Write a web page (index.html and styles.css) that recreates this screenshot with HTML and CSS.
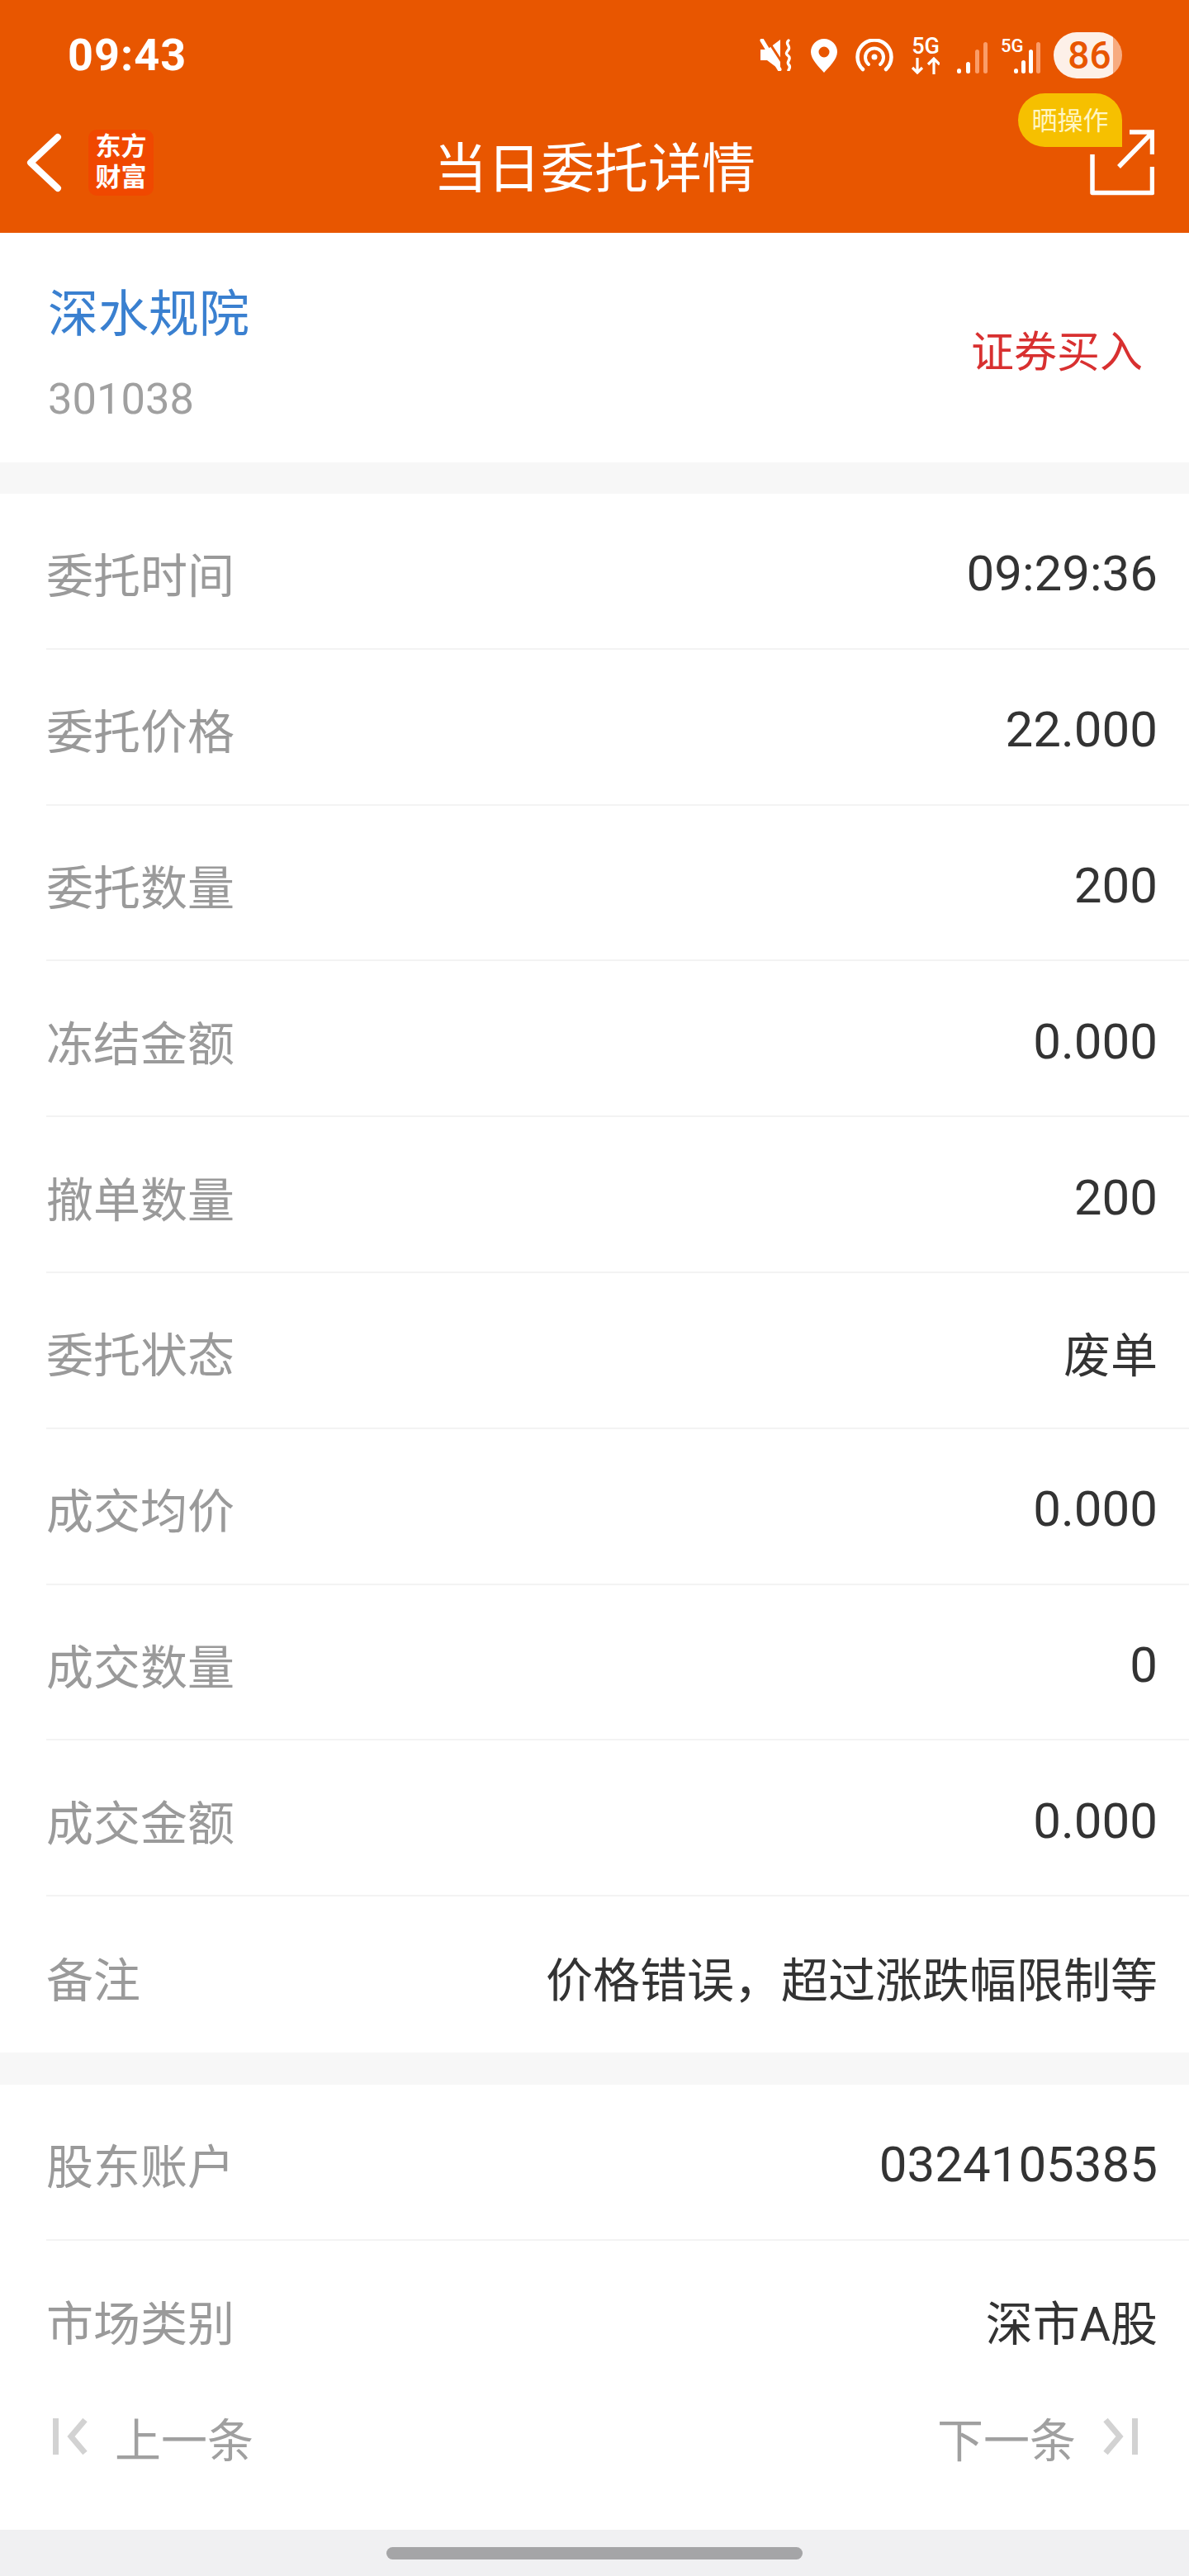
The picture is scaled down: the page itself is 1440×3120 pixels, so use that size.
FILE: index.html
```html
<!DOCTYPE html>
<html lang="zh-CN">
<head>
    <meta charset="UTF-8">
    <meta name="viewport" content="width=device-width, initial-scale=1.0">
    <title>当日委托详情</title>
    <link rel="stylesheet" href="styles.css">
</head>
<body>
    <div class="page">
        <header class="top">
            <div class="statusbar">
                <span class="clock">09:43</span>
                <div class="status-icons">
                    <svg class="ico" width="40" height="39" viewBox="0 0 40 39">
                        <path d="M1 13h8L25 1v37L9 26H1z" fill="#fff"/>
                        <path d="M8 -1l24 37" stroke="#e85600" stroke-width="3"/>
                        <path d="M3 2l21 35" stroke="#fff" stroke-width="5" stroke-linecap="round"/>
                        <path d="M35 2c-5 4 3 7 0 11s-4 5 0 8-3 7 0 10 1 5 0 7" fill="none" stroke="#fff" stroke-width="3.400" stroke-linecap="round"/>
                    </svg>
                    <svg class="ico" width="32" height="41" viewBox="0 0 32 41">
                        <path fill-rule="evenodd" d="M16 0a16 16 0 0 1 16 16c0 9-10 18-16 25C10 34 0 25 0 16A16 16 0 0 1 16 0zm0 9.500a6.500 6.500 0 1 0 0 13 6.500 6.500 0 0 0 0-13z" fill="#fff"/>
                    </svg>
                    <svg class="ico" width="46" height="40" viewBox="0 0 46 40">
                        <path d="M9 37a20.500 20.500 0 1 1 28 0" fill="none" stroke="#fff" stroke-width="4.500" stroke-linecap="round"/>
                        <path d="M16 31a11 11 0 1 1 14 0" fill="none" stroke="#fff" stroke-width="4" stroke-linecap="round"/>
                        <circle cx="23" cy="22" r="3.500" fill="#fff"/>
                    </svg>
                    <div class="net">
                        <span>5G</span>
                        <svg width="34" height="21" viewBox="0 0 34 21">
                            <path d="M7 1v18M1 13l6 6 6-6M27 21V2M20 9l7-7 7 7" fill="none" stroke="#fff" stroke-width="3.200"/>
                        </svg>
                    </div>
                    <svg class="ico bars" width="37" height="38" viewBox="0 0 37 38">
                        <rect x="0" y="32" width="5" height="6" rx="2.500" fill="#fff"/>
                        <rect x="11" y="24" width="5" height="14" rx="2.500" fill="#fff"/>
                        <rect x="22" y="9" width="5" height="29" rx="2.500" fill="#fb9d68"/>
                        <rect x="32" y="0" width="5" height="38" rx="2.500" fill="#fb9d68"/>
                    </svg>
                    <div class="sim">
                        <span>5G</span>
                        <svg width="32" height="38" viewBox="0 0 32 38">
                            <rect x="0" y="32" width="5" height="6" rx="2.500" fill="#fff"/>
                            <rect x="9" y="22" width="5" height="16" rx="2.500" fill="#fff"/>
                            <rect x="18" y="9" width="5" height="29" rx="2.500" fill="#fff"/>
                            <rect x="27" y="0" width="5" height="38" rx="2.500" fill="#fb9d68"/>
                        </svg>
                    </div>
                    <div class="battery">86</div>
                </div>
            </div>
            <div class="navbar">
                <svg class="back" width="46" height="74" viewBox="0 0 46 74">
                    <path d="M40 6L7 37l33 31" fill="none" stroke="#fff" stroke-width="8" stroke-linecap="round" stroke-linejoin="round"/>
                </svg>
                <div class="logo">东方<br>财富</div>
                <h1>当日委托详情</h1>
                <svg class="share" width="78" height="80" viewBox="0 0 78 80">
                    <path d="M3 30v46.500h72.500V45" fill="none" stroke="#fff" stroke-width="5.500" stroke-linejoin="round"/>
                    <path d="M35 45L74 5M48 3h27.500v27" fill="none" stroke="#fff" stroke-width="5.500"/>
                </svg>
                <div class="bubble">晒操作</div>
            </div>
        </header>

        <section class="stock">
            <div class="stock-info">
                <div class="stock-name">深水规院</div>
                <div class="stock-code">301038</div>
            </div>
            <div class="stock-side">证券买入</div>
        </section>

        <section class="group">
            <div class="row"><span>委托时间</span><b class="num">09:29:36</b></div>
            <div class="row"><span>委托价格</span><b class="num">22.000</b></div>
            <div class="row"><span>委托数量</span><b class="num">200</b></div>
            <div class="row"><span>冻结金额</span><b class="num">0.000</b></div>
            <div class="row"><span>撤单数量</span><b class="num">200</b></div>
            <div class="row"><span>委托状态</span><b>废单</b></div>
            <div class="row"><span>成交均价</span><b class="num">0.000</b></div>
            <div class="row"><span>成交数量</span><b class="num">0</b></div>
            <div class="row"><span>成交金额</span><b class="num">0.000</b></div>
            <div class="row no-line"><span>备注</span><b>价格错误，超过涨跌幅限制等</b></div>
        </section>

        <section class="group group-last">
            <div class="row"><span>股东账户</span><b class="num">0324105385</b></div>
            <div class="row no-line"><span>市场类别</span><b>深市A股</b></div>
            <div class="pager">
                <div class="pager-btn">
                    <svg width="42" height="46" viewBox="0 0 42 46">
                        <path d="M3.500 1v44M39 3L22 23l17 20" fill="none" stroke="#d2d2d2" stroke-width="7"/>
                    </svg>
                    <span>上一条</span>
                </div>
                <div class="pager-btn">
                    <span>下一条</span>
                    <svg width="42" height="46" viewBox="0 0 42 46">
                        <path d="M38.500 1v44M3 3l17 20L3 43" fill="none" stroke="#d2d2d2" stroke-width="7"/>
                    </svg>
                </div>
            </div>
        </section>

        <div class="home-area"><div class="home-bar"></div></div>
    </div>
</body>
</html>
```

FILE: styles.css
```css
* {
    box-sizing: border-box;
}
body {
    margin: 0;
    font-family: "Roboto", "Noto Sans CJK SC", sans-serif;
    background: #f7f7f7;
}
.page {
    width: 1440px;
    height: 3120px;
    display: flex;
    flex-direction: column;
    overflow: hidden;
}
.top {
    height: 282px;
    flex-shrink: 0;
    background: #e85600;
    color: #fff;
}

/* status bar */
.statusbar {
    height: 100px;
    padding: 36px 81px 0 82px;
    display: flex;
    justify-content: space-between;
}
.clock {
    font-size: 54px;
    line-height: 62px;
    font-weight: 700;
    letter-spacing: 1px;
}
.status-icons {
    display: flex;
    height: 60px;
    align-items: flex-start;
    gap: 22px;
}
.ico {
    margin-top: 11px;
}
.bars {
    margin-top: 15px;
    margin-left: -1px;
}
.net {
    width: 34px;
    margin-top: 8px;
    display: flex;
    flex-direction: column;
    align-items: center;
    font-size: 27px;
    line-height: 25px;
    font-weight: 500;
}
.sim {
    position: relative;
    width: 48px;
    height: 38px;
    margin-top: 15px;
    margin-left: -6px;
    padding-left: 16px;
}
.sim span {
    position: absolute;
    left: 0;
    top: -6px;
    font-size: 22px;
    line-height: 22px;
    font-weight: 500;
}
.battery {
    width: 83px;
    height: 56px;
    margin-top: 3px;
    margin-left: -6px;
    padding-left: 4px;
    border-radius: 28px;
    background: linear-gradient(to right, #fdf0e8 0, #fdf0e8 72px, #f7ab80 72px);
    color: #e85600;
    font-size: 46px;
    font-weight: 500;
    line-height: 56px;
    text-align: center;
}

/* nav */
.navbar {
    position: relative;
    height: 182px;
}
.back {
    position: absolute;
    left: 30px;
    top: 60px;
}
.logo {
    position: absolute;
    left: 107px;
    top: 57px;
    width: 79px;
    height: 80px;
    padding-top: 2px;
    background: #f04800;
    border-radius: 10px;
    font-size: 31px;
    line-height: 37px;
    font-weight: 700;
    text-align: center;
}
h1 {
    margin: 0;
    text-align: center;
    font-size: 65px;
    font-weight: 400;
    line-height: 210px;
    height: 182px;
}
.share {
    position: absolute;
    left: 1320px;
    top: 57px;
}
.bubble {
    position: absolute;
    left: 1233px;
    top: 13px;
    width: 126px;
    height: 65px;
    background: #f6c000;
    border-radius: 33px 33px 0 33px;
    font-size: 31px;
    line-height: 68px;
    text-align: center;
    color: #fff6c4;
}

/* stock header */
.stock {
    height: 278px;
    flex-shrink: 0;
    background: #fff;
    padding: 0 56px 0 58px;
    display: flex;
    justify-content: space-between;
    align-items: flex-start;
}
.stock-info {
    padding-top: 59px;
}
.stock-name {
    color: #3a80d0;
    font-size: 61px;
    line-height: 80px;
}
.stock-code {
    color: #a0a0a0;
    font-size: 52.500px;
    line-height: 60px;
    margin-top: 32px;
}
.stock-side {
    color: #d83030;
    font-size: 52px;
    line-height: 70px;
    margin-top: 111px;
}

/* rows */
.group {
    margin-top: 38px;
    background: #fff;
    flex-shrink: 0;
}
.row {
    height: 188.800px;
    flex-shrink: 0;
    margin-left: 56px;
    padding: 4px 38px 0 0;
    border-bottom: 2px solid #f3f3f3;
    display: flex;
    justify-content: space-between;
    align-items: center;
    font-size: 57px;
}
.row span {
    color: #9a9a9a;
}
.row b {
    color: #333;
    font-weight: 400;
}
.row .num {
    font-size: 60px;
    margin-top: 3px;
}
.no-line {
    border-bottom: 0;
}
.group-last {
    flex: 1;
    display: flex;
    flex-direction: column;
    margin-top: 39px;
}

/* prev / next */
.pager {
    flex: 1;
    padding: 8px 62px 0 64px;
    display: flex;
    justify-content: space-between;
    align-items: flex-start;
}
.pager-btn {
    display: flex;
    align-items: center;
    gap: 33px;
    font-size: 56px;
    color: #a0a0a0;
}
.home-area {
    height: 56px;
    flex-shrink: 0;
    background: #f0f0f2;
    padding: 21px 0 0 468px;
}
.home-bar {
    width: 504px;
    height: 15px;
    background: #a5a5a7;
    border-radius: 8px;
}
```
